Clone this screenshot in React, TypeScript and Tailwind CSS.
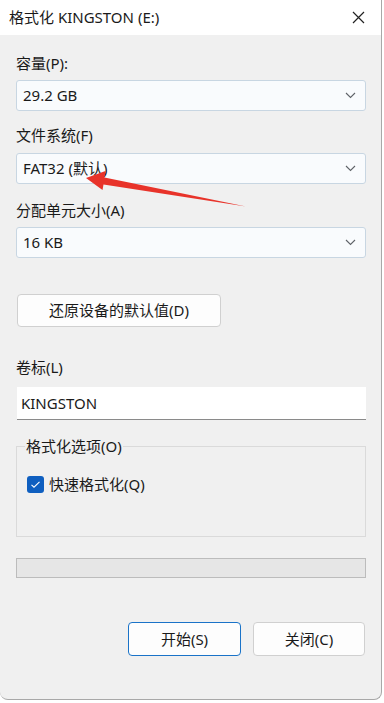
import React from "react";

const font = { fontFamily: '"Noto Sans", "Noto Sans CJK SC", sans-serif' };

function Chevron() {
  return (
    <svg width="11" height="7" viewBox="0 0 11 7" className="shrink-0">
      <path d="M1 1 L5.5 5.5 L10 1" fill="none" stroke="#5f6368" strokeWidth="1.1" />
    </svg>
  );
}

function Select({ value }: { value: string }) {
  return (
    <div className="h-[31px] w-[350px] rounded-[3px] border border-[#c8d6e2] bg-[#f9fbfd] flex items-center justify-between pl-[6px] pr-[9px] text-[15px] text-[#1a1a1a]">
      <span>{value}</span>
      <Chevron />
    </div>
  );
}

function Label({ text, className = "" }: { text: string; className?: string }) {
  return <div className={"h-[20px] leading-[20px] text-[15px] text-[#1a1a1a] " + className}>{text}</div>;
}

export default function App() {
  return (
    <div className="relative w-[384px] h-[703px] bg-white overflow-hidden" style={font}>
      <div className="w-[382px] h-[700px] rounded-b-[8px] border-r border-b border-[#a8a8a8] bg-[#f0f0f0] flex flex-col overflow-hidden">
        <div className="h-[35px] bg-white flex items-center justify-between pl-[9px] pr-[16px] shrink-0">
          <span className="text-[15px] text-[#1a1a1a]">格式化 KINGSTON (E:)</span>
          <svg width="13" height="13" viewBox="0 0 13 13">
            <path d="M1 1 L12 12 M12 1 L1 12" stroke="#222" strokeWidth="1.2" />
          </svg>
        </div>
        <div className="flex flex-col pl-4 pr-4">
          <Label text="容量(P):" className="mt-[18px]" />
          <div className="mt-[7px]">
            <Select value="29.2 GB" />
          </div>
          <Label text="文件系统(F)" className="mt-[14px]" />
          <div className="mt-[8px]">
            <Select value="FAT32 (默认)" />
          </div>
          <Label text="分配单元大小(A)" className="mt-[16px]" />
          <div className="mt-[7px]">
            <Select value="16 KB" />
          </div>
          <div className="mt-[36px] ml-[1px] h-[33px] w-[204px] rounded-[4px] border border-[#d0d0d0] bg-[#fdfdfd] flex items-center justify-center text-[15px] text-[#1a1a1a]">
            还原设备的默认值(D)
          </div>
          <Label text="卷标(L)" className="mt-[30px]" />
          <div className="mt-[10px] ml-[1px] h-[33px] w-[349px] bg-white border-b border-[#8a8a8a] flex items-center pl-[4px] text-[15px] text-[#1a1a1a]">
            KINGSTON
          </div>
          <div className="relative mt-[26px] h-[91px] w-[350px] border border-[#dadada]">
            <div className="absolute left-[8px] top-[-11px] px-[1px] bg-[#f0f0f0] h-[20px] leading-[20px] text-[15px] text-[#1a1a1a]">
              格式化选项(O)
            </div>
            <div className="mt-[27px] ml-[10px] flex items-center gap-[5px]">
              <div className="w-[17px] h-[17px] rounded-[3px] bg-[#0f5fc0] flex items-center justify-center">
                <svg width="11" height="9" viewBox="0 0 11 9">
                  <path d="M1.5 4.8 L4 7.2 L9.5 1.8" fill="none" stroke="#fff" strokeWidth="1.1" />
                </svg>
              </div>
              <span className="text-[15px] text-[#1a1a1a] leading-[20px]">快速格式化(Q)</span>
            </div>
          </div>
          <div className="mt-[21px] h-[20px] w-[350px] bg-[#e6e6e6] border border-[#bcbcbc]" />
          <div className="mt-[44px] flex justify-end gap-[12px]">
            <div className="h-[34px] w-[113px] rounded-[4px] border border-[#1a73c8] bg-[#fdfdfd] flex items-center justify-center text-[15px] text-[#1a1a1a]">
              开始(S)
            </div>
            <div className="h-[34px] w-[112px] rounded-[4px] border border-[#d0d0d0] bg-[#fdfdfd] flex items-center justify-center text-[15px] text-[#1a1a1a]">
              关闭(C)
            </div>
          </div>
        </div>
      </div>
      <svg className="absolute left-0 top-0 pointer-events-none" width="384" height="703" viewBox="0 0 384 703">
        <polygon
          points="86,178 105.5,171 104.5,177.5 246,206.5 103.5,184.5 102.5,190"
          fill="#e8332a"
        />
      </svg>
    </div>
  );
}
